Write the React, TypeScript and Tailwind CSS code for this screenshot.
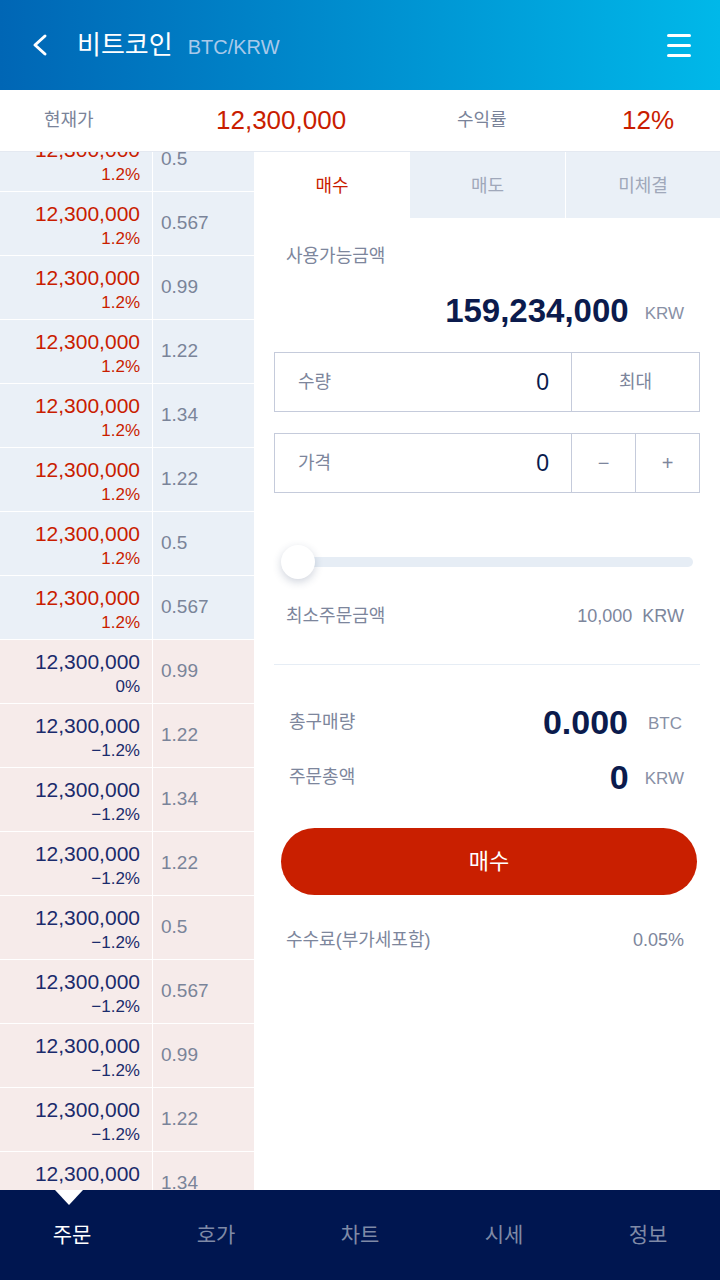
import React from "react"

type Row = { price: string; pct: string; qty: string; side: "ask" | "bid" }

const asks: Row[] = ["0.5", "0.567", "0.99", "1.22", "1.34", "1.22", "0.5", "0.567"].map(q => ({
  price: "12,300,000",
  pct: "1.2%",
  qty: q,
  side: "ask",
}))

const bids: Row[] = ["0.99", "1.22", "1.34", "1.22", "0.5", "0.567", "0.99", "1.22", "1.34"].map((q, i) => ({
  price: "12,300,000",
  pct: i === 0 ? "0%" : "−1.2%",
  qty: q,
  side: "bid",
}))

const navItems = ["주문", "호가", "차트", "시세", "정보"]

function OrderRow({ row }: { row: Row }) {
  const ask = row.side === "ask"
  return (
    <div className={`flex h-[64px] border-b border-white ${ask ? "bg-[#eaf0f7]" : "bg-[#f6ebea]"}`}>
      <div
        className={`w-[153px] shrink-0 border-r border-white pr-[12px] pt-[11px] text-right ${
          ask ? "text-[#c91d00]" : "text-[#1b2b6c]"
        }`}
      >
        <div className="text-[21px] leading-[22px]">{row.price}</div>
        <div className="mt-[4px] text-[17px] leading-[20px]">{row.pct}</div>
      </div>
      <div className="flex flex-1 items-center pl-[8px] text-[19px] text-[#7a8499]">{row.qty}</div>
    </div>
  )
}

export default function App() {
  return (
    <div className="flex h-[1280px] w-[720px] flex-col overflow-hidden bg-white font-['Liberation_Sans','Noto_Sans_CJK_KR',sans-serif]">

      {/* Header */}
      <header className="flex h-[90px] shrink-0 items-center bg-linear-to-r from-[#0066b5] to-[#00b8e9] pl-[30px] pr-[29px]">
        <svg width="20" height="24" viewBox="0 0 20 24" fill="none">
          <path d="M15 3 L5 12 L15 21" stroke="white" strokeWidth="3" strokeLinecap="round" strokeLinejoin="round" />
        </svg>
        <span className="ml-[27px] text-[26px] text-white">비트코인</span>
        <span className="ml-[15px] mt-[4px] text-[20px] text-[#a9c9ea]">BTC/KRW</span>
        <div className="ml-auto flex w-[24px] flex-col gap-[7px]">
          <span className="h-[3px] rounded-full bg-white" />
          <span className="h-[3px] rounded-full bg-white" />
          <span className="h-[3px] rounded-full bg-white" />
        </div>
      </header>

      {/* Price bar */}
      <div className="flex h-[62px] shrink-0 items-center border-b border-[#e4e9f1] pl-[44px]">
        <span className="w-[172px] text-[18px] text-[#7a8399]">현재가</span>
        <span className="w-[241px] text-[26px] text-[#c91d00]">12,300,000</span>
        <span className="w-[165px] text-[18px] text-[#7a8399]">수익률</span>
        <span className="text-[26px] text-[#c91d00]">12%</span>
      </div>

      {/* Body */}
      <div className="flex min-h-0 flex-1">

        {/* Order book */}
        <div className="w-[254px] shrink-0 overflow-hidden">
          <div className="-mt-[24px]">
            {asks.map((r, i) => (
              <OrderRow key={`a${i}`} row={r} />
            ))}
            {bids.map((r, i) => (
              <OrderRow key={`b${i}`} row={r} />
            ))}
          </div>
        </div>

        {/* Order panel */}
        <div className="flex-1">
          <div className="flex h-[66px] text-[18px]">
            <div className="flex w-[156px] items-center justify-center bg-white pt-[2px] text-[#c91d00]">매수</div>
            <div className="flex w-[156px] items-center justify-center border-r border-white bg-[#eaf0f7] pt-[2px] text-[#a0a8ba]">매도</div>
            <div className="flex flex-1 items-center justify-center bg-[#eaf0f7] pt-[2px] text-[#a0a8ba]">미체결</div>
          </div>

          <div className="px-[20px]">
            <div className="mt-[20px] flex h-[36px] items-center pl-[12px] text-[18px] text-[#7d869c]">사용가능금액</div>

            <div className="flex h-[74px] items-center justify-end pr-[16px]">
              <span className="text-[33px] font-bold text-[#0b1b4d]">159,234,000</span>
              <span className="ml-[16px] mt-[6px] text-[17px] text-[#8890a5]">KRW</span>
            </div>

            <div className="mt-[4px] flex h-[60px] border border-[#c5cbdb]">
              <div className="flex flex-1 items-center justify-between border-r border-[#c5cbdb] pl-[23px] pr-[22px]">
                <span className="text-[18px] text-[#7d869c]">수량</span>
                <span className="text-[23px] text-[#0b1b4d]">0</span>
              </div>
              <div className="flex w-[127px] items-center justify-center text-[18px] text-[#7d869c]">최대</div>
            </div>

            <div className="mt-[21px] flex h-[60px] border border-[#c5cbdb]">
              <div className="flex flex-1 items-center justify-between border-r border-[#c5cbdb] pl-[23px] pr-[22px]">
                <span className="text-[18px] text-[#7d869c]">가격</span>
                <span className="text-[23px] text-[#0b1b4d]">0</span>
              </div>
              <div className="flex w-[64px] items-center justify-center border-r border-[#c5cbdb] text-[20px] text-[#7d869c]">−</div>
              <div className="flex w-[63px] items-center justify-center text-[20px] text-[#7d869c]">+</div>
            </div>

            {/* Slider */}
            <div className="relative mt-[39px] ml-[8px] mr-[7px] flex h-[60px] items-center">
              <div className="h-[10px] w-full rounded-full bg-[#e6edf5]" />
              <div className="absolute left-[-1px] top-[13px] h-[34px] w-[34px] rounded-full bg-white shadow-[0_3px_8px_rgba(40,60,100,0.22)]" />
            </div>

            <div className="mt-[6px] flex h-[36px] items-center justify-between pl-[12px] pr-[16px] text-[18px] text-[#7d869c]">
              <span>최소주문금액</span>
              <span>10,000&nbsp;&nbsp;KRW</span>
            </div>

            <div className="mt-[30px] h-px bg-[#e6edf5]" />

            <div className="mt-[30px] flex h-[54px] items-center pl-[15px] pr-[18px]">
              <span className="text-[18px] text-[#7d869c]">총구매량</span>
              <span className="ml-auto text-[34px] font-bold text-[#0b1b4d]">0.000</span>
              <span className="ml-[20px] mt-[4px] text-[17px] text-[#8890a5]">BTC</span>
            </div>
            <div className="flex h-[56px] items-center pl-[15px] pr-[16px]">
              <span className="text-[18px] text-[#7d869c]">주문총액</span>
              <span className="ml-auto text-[34px] font-bold text-[#0b1b4d]">0</span>
              <span className="ml-[16px] mt-[4px] text-[17px] text-[#8890a5]">KRW</span>
            </div>

            <button className="mt-[23px] ml-[7px] flex h-[67px] w-[416px] items-center justify-center rounded-full bg-[#c91f00] text-[22px] text-white">
              매수
            </button>

            <div className="mt-[27px] flex h-[36px] items-center justify-between pl-[12px] pr-[16px] text-[18px] text-[#7d869c]">
              <span>수수료(부가세포함)</span>
              <span>0.05%</span>
            </div>
          </div>
        </div>
      </div>

      {/* Bottom nav */}
      <nav className="relative flex h-[90px] shrink-0 bg-[#001650]">
        <div className="absolute left-[55px] top-0 h-0 w-0 border-x-[14px] border-t-[15px] border-x-transparent border-t-white" />
        {navItems.map((n, i) => (
          <div
            key={n}
            className={`flex flex-1 items-center justify-center text-[21px] ${i === 0 ? "text-white" : "text-[#7f8aa6]"}`}
          >
            {n}
          </div>
        ))}
      </nav>
    </div>
  )
}
